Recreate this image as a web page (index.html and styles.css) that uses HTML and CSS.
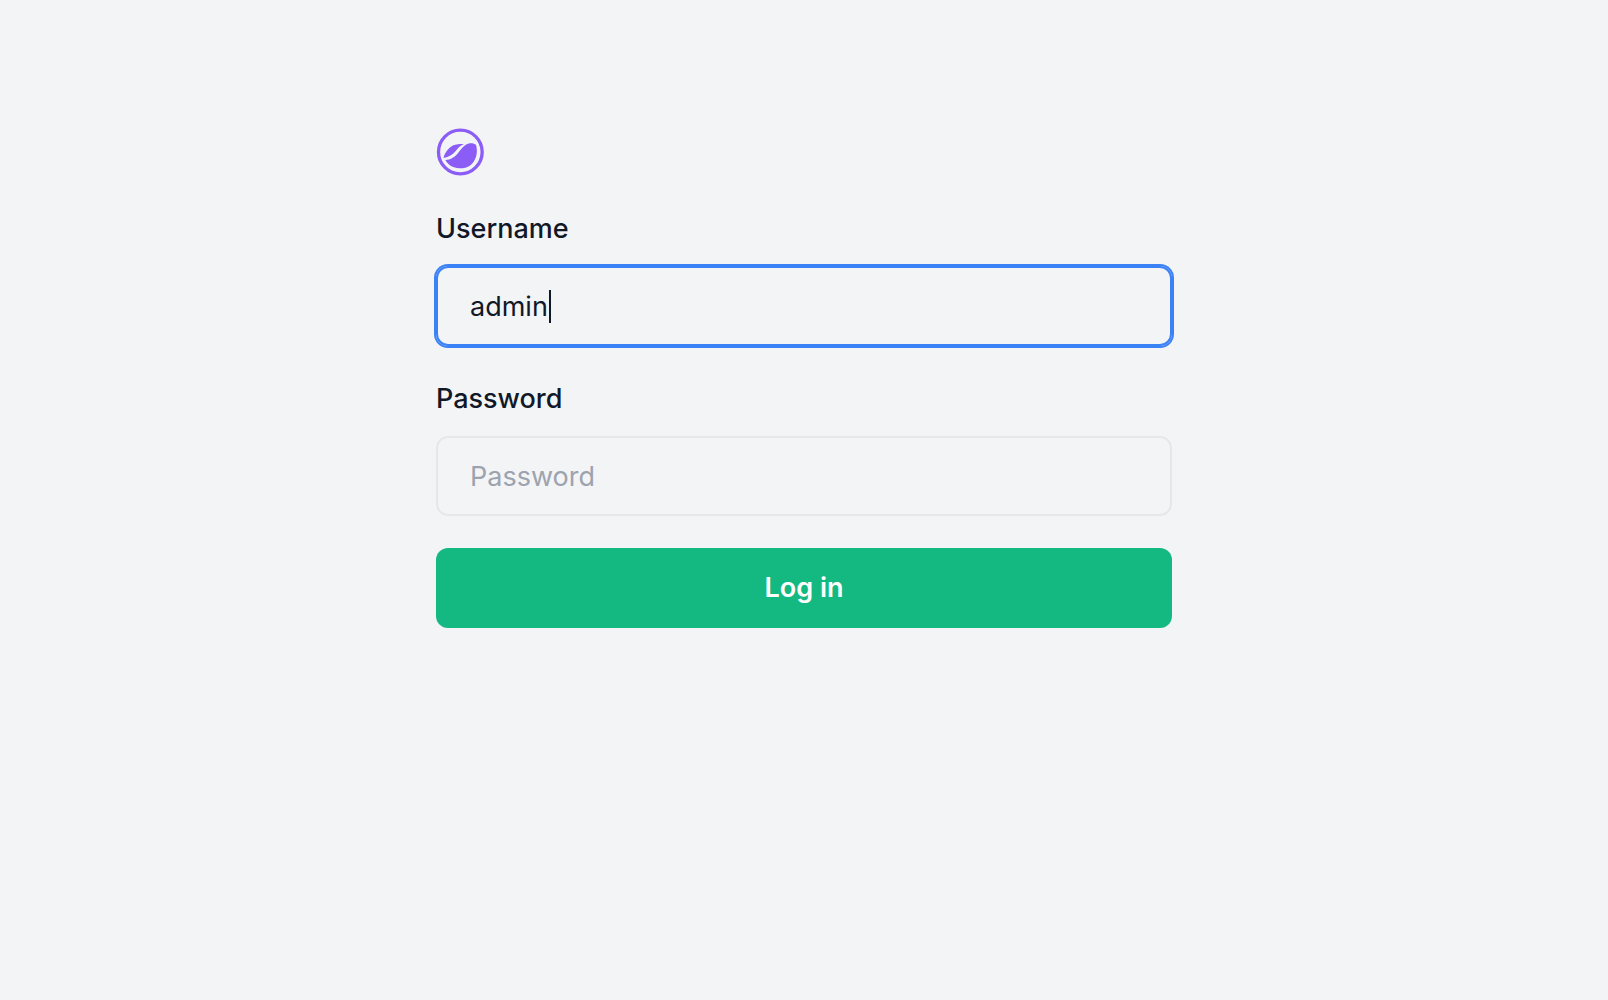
FILE: index.html
```html
<!DOCTYPE html>
<html lang="en">
<head>
  <meta charset="utf-8">
  <meta name="viewport" content="width=device-width, initial-scale=1">
  <title>Log in</title>
  <link rel="stylesheet" href="styles.css">
</head>
<body>
  <main class="login">
    <svg class="logo" viewBox="0 0 144 144" aria-hidden="true">
      <circle cx="73" cy="72" r="65.5" fill="none" stroke="currentColor" stroke-width="10"/>
      <path fill="currentColor" d="M23 87C29 68 43 53 58 50C67 48 76 48 83 49C72 53 66 61 59 69C50 79 38 88 23 90Z"/>
      <path fill="currentColor" d="M28 96C45 96 57 87 68 73C79 59 88 48 101 46C109 45 116 47 120 51C125 67 123 87 113 101C103 116 87 122 70 121C51 120 36 111 28 96Z"/>
    </svg>
    <form class="form">
      <div class="group">
        <label class="label" for="username">Username</label>
        <div class="field">
          <input class="input input-active" id="username" type="text" value="admin" placeholder="Username" autocomplete="off" spellcheck="false">
          <span class="caret" aria-hidden="true"></span>
        </div>
      </div>
      <div class="group">
        <label class="label" for="password">Password</label>
        <input class="input" id="password" type="password" placeholder="Password">
      </div>
      <button class="button" type="submit">Log in</button>
    </form>
  </main>
</body>
</html>
```
FILE: styles.css
```css
*,
*::before,
*::after {
  box-sizing: border-box;
}

body {
  margin: 0;
  background: #f3f4f6;
  color: #111827;
  font-family: Inter, "Liberation Sans", sans-serif;
  font-size: 27px;
  line-height: 42px;
}

.login {
  display: flex;
  flex-direction: column;
  gap: 32px;
  max-width: 736px;
  margin: 0 auto;
  padding: 128px 0;
}

.logo {
  display: block;
  width: 48px;
  height: 48px;
  color: #8b5cf6;
}

.form,
.group {
  display: flex;
  flex-direction: column;
}

.form {
  gap: 32px;
}

.group {
  gap: 16px;
}

.label {
  font-weight: 500;
}

.field {
  position: relative;
}

.input {
  display: block;
  width: 100%;
  height: 80px;
  padding: 0 32px;
  border: 2px solid #e5e7eb;
  border-radius: 12px;
  outline: none;
  background: transparent;
  color: inherit;
  font: inherit;
}

.input::placeholder {
  color: #9ca3af;
  opacity: 1;
}

.input:focus,
.input-active {
  border-color: #3b82f6;
  box-shadow: 0 0 0 2px #3b82f6;
}

.caret {
  position: absolute;
  top: 24px;
  left: 113px;
  width: 2px;
  height: 33px;
  background: #111827;
}

.button {
  height: 80px;
  border: 0;
  border-radius: 12px;
  background: #14b881;
  color: #fff;
  font: inherit;
  font-weight: 600;
  cursor: pointer;
}
```
